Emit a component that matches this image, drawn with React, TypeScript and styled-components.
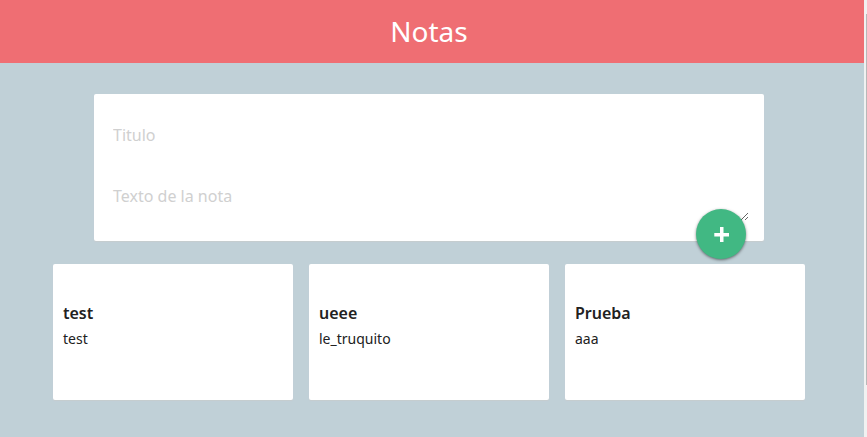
import React, { useState } from "react";
import styled, { createGlobalStyle } from "styled-components";

const GlobalStyle = createGlobalStyle`
  * { box-sizing: border-box; }
  body {
    margin: 0;
    background: #c0d0d7;
    color: #212121;
    font-family: "Noto Sans", "Open Sans", sans-serif;
  }
`;

const Page = styled.div`
  display: grid;
  grid-template-columns: 1fr 3px;
  min-height: 100vh;
`;

const Content = styled.div`
  min-width: 0;
`;

const Header = styled.header`
  padding: 0 6px 0 0;
  background: #ef6e73;
  color: #fff;
  text-align: center;
`;

const Title = styled.h1`
  margin: 0;
  font-size: 28px;
  font-weight: 400;
  line-height: 63px;
`;

const Main = styled.main`
  display: flex;
  flex-direction: column;
  align-items: center;
  gap: 23px;
  padding: 31px 22px 37px 16px;
`;

const NoteForm = styled.form`
  position: relative;
  display: flex;
  flex-direction: column;
  gap: 16px;
  width: 100%;
  max-width: 670px;
  padding: 20px 15px;
  border-radius: 2px;
  background: #fff;
  box-shadow: 0 1px 1px #c6cccf;
`;

const fieldText = `
  display: block;
  width: 100%;
  margin: 0;
  border: 0;
  outline: 0;
  background: transparent;
  color: #212121;
  font-family: inherit;
  font-size: 16px;
  line-height: 24px;
  &::placeholder { color: #d0d0d0; opacity: 1; }
`;

const TitleInput = styled.input`
  ${fieldText}
  height: 42px;
  padding: 0 4px;
`;

const TextArea = styled.textarea`
  ${fieldText}
  height: 49px;
  padding: 12px 4px;
  overflow: hidden;
  resize: vertical;
`;

const AddButton = styled.button`
  position: absolute;
  right: 18px;
  bottom: -18px;
  display: grid;
  place-items: center;
  width: 50px;
  height: 50px;
  padding: 0;
  border: 0;
  border-radius: 50%;
  background: #41b883;
  box-shadow: 0 1px 3px rgba(0, 0, 0, 0.5);
  cursor: pointer;
`;

const Notes = styled.section`
  display: flex;
  flex-wrap: wrap;
  justify-content: center;
  gap: 16px;
`;

const Note = styled.article`
  width: 240px;
  min-height: 136px;
  padding: 36px 10px;
  border-radius: 2px;
  background: #fff;
  box-shadow: 0 1px 1px #c6cccf;
`;

const NoteTitle = styled.h2`
  margin: 0;
  font-size: 16px;
  font-weight: 600;
  line-height: 26px;
`;

const NoteText = styled.p`
  margin: 0;
  font-size: 14px;
  line-height: 26px;
`;

const ScrollTrack = styled.div`
  position: sticky;
  top: 0;
  height: 100vh;
  padding: 14px 0 52px 2px;
  background: #f1f1f1;
`;

const ScrollThumb = styled.div`
  height: 100%;
  background: #b8b8b8;
`;

type NoteData = { title: string; text: string };

const initialNotes: NoteData[] = [
  { title: "test", text: "test" },
  { title: "ueee", text: "le_truquito" },
  { title: "Prueba", text: "aaa" },
];

export default function App() {
  const [notes, setNotes] = useState(initialNotes);
  const [title, setTitle] = useState("");
  const [text, setText] = useState("");

  const addNote = (event: React.FormEvent) => {
    event.preventDefault();
    if (!title && !text) return;
    setNotes([...notes, { title, text }]);
    setTitle("");
    setText("");
  };

  return (
    <>
      <GlobalStyle />
      <Page>
        <Content>
          <Header>
            <Title>Notas</Title>
          </Header>
          <Main>
            <NoteForm onSubmit={addNote}>
              <TitleInput
                aria-label="Titulo"
                placeholder="Titulo"
                value={title}
                onChange={(e) => setTitle(e.target.value)}
              />
              <TextArea
                aria-label="Texto de la nota"
                placeholder="Texto de la nota"
                value={text}
                onChange={(e) => setText(e.target.value)}
              />
              <AddButton type="submit" aria-label="+">
                <svg width="16" height="16" viewBox="0 0 16 16" aria-hidden="true">
                  <path d="M7 1h3.5v6H16v3.5h-5.5V16H7v-5.500H1.300V7H7z" fill="#fff" />
                </svg>
              </AddButton>
            </NoteForm>
            <Notes>
              {notes.map((note, index) => (
                <Note key={index}>
                  <NoteTitle>{note.title}</NoteTitle>
                  <NoteText>{note.text}</NoteText>
                </Note>
              ))}
            </Notes>
          </Main>
        </Content>
        <ScrollTrack>
          <ScrollThumb />
        </ScrollTrack>
      </Page>
    </>
  );
}
